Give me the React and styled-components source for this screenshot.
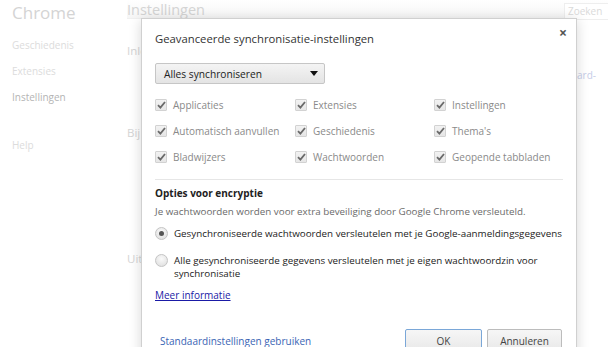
import React from "react"
import styled, { createGlobalStyle } from "styled-components"

const GlobalStyle = createGlobalStyle`
  html, body {
    margin: 0;
    padding: 0;
    background: #fff;
    overflow: hidden;
  }
  body {
    width: 608px;
    height: 347px;
    font-family: "Open Sans", "Liberation Sans", sans-serif;
  }
`

const Page = styled.div`
  position: relative;
  width: 608px;
  height: 347px;
  overflow: hidden;
  display: flex;
  background: #fff;
`

const Sidebar = styled.nav`
  width: 115px;
  padding: 1px 0 0 12px;
  display: flex;
  flex-direction: column;
  .brand {
    font-size: 17px;
    color: #d4d4d4;
    height: 31px;
  }
  .item {
    font-size: 10px;
    color: #dcdcdc;
    height: 26px;
    line-height: 26px;
  }
  .item.active {
    color: #b4b4b4;
  }
  .spacer {
    height: 22px;
  }
`

const Main = styled.main`
  flex: 1;
  display: flex;
  flex-direction: column;
`

const TopBar = styled.header`
  height: 18px;
  display: flex;
  justify-content: space-between;
  align-items: flex-start;
  background: linear-gradient(#fff, #f6f6f6);
  border-bottom: 1px solid #f0f0f0;
  h1 {
    margin: 0;
    font-weight: normal;
    font-size: 14.5px;
    line-height: 20px;
    color: #d4d4d4;
  }
  .search {
    margin-top: 3px;
    width: 40px;
    height: 15px;
    border: 1px solid #eee;
    border-right: none;
    font-size: 10px;
    color: #dadada;
    padding-left: 3px;
    background: #fff;
  }
`

const Section = styled.div`
  font-size: 11.5px;
  color: #d4d4d4;
  margin-top: ${p => p.top}px;
  height: 16px;
  display: flex;
  justify-content: ${p => (p.right ? "flex-end" : "flex-start")};
  .link {
    color: #c6cde8;
    font-size: 10px;
    margin-right: 12px;
  }
`

const Dialog = styled.div`
  position: absolute;
  left: 141px;
  top: 18px;
  width: 434px;
  height: 345px;
  background: #fff;
  border: 1px solid #d0d0d0;
  box-shadow: 0 2px 12px rgba(0, 0, 0, 0.16);
  color: #333;
  font-size: 10px;
`

const DialogHead = styled.div`
  display: flex;
  justify-content: space-between;
  align-items: center;
  padding: 8px 9px 0 13px;
  height: 22px;
  h2 {
    margin: 0;
    font-weight: normal;
    font-size: 11.3px;
    color: #333;
  }
`

const Close = styled.span`
  font-size: 14px;
  color: #555;
  font-weight: bold;
  line-height: 14px;
  margin-top: -11px;
`

const Body = styled.div`
  padding: 0 6px 0 13px;
`

const Select = styled.div`
  margin-top: 14px;
  width: 170px;
  height: 21px;
  box-sizing: border-box;
  border: 1px solid #c6c6c6;
  border-radius: 2px;
  background: linear-gradient(#f4f4f4, #e4e4e4);
  display: flex;
  align-items: center;
  justify-content: space-between;
  padding: 0 6px 0 8px;
  font-size: 10.2px;
  color: #222;
  .arrow {
    width: 0;
    height: 0;
    border-left: 4px solid transparent;
    border-right: 4px solid transparent;
    border-top: 5px solid #111;
  }
`

const Grid = styled.div`
  margin-top: 8px;
  display: grid;
  grid-template-columns: 140px 139px auto;
  grid-auto-rows: 26px;
  align-items: center;
`

const Check = styled.label`
  display: flex;
  align-items: center;
  gap: 6px;
  color: #8a8a8a;
  font-size: 10px;
  .box {
    width: 12px;
    height: 12px;
    box-sizing: border-box;
    border: 1px solid #d2d2d2;
    border-radius: 1px;
    background: linear-gradient(#f2f2f2, #e6e6e6);
    display: flex;
    align-items: center;
    justify-content: center;
  }
`

const Rule = styled.div`
  margin: 9px 7px 0 0;
  border-top: 1px solid #e6e6e6;
`

const Heading = styled.div`
  margin-top: 6px;
  font-weight: bold;
  font-size: 10px;
  color: #222;
  line-height: 14px;
`

const Note = styled.div`
  margin-top: 5px;
  color: #6a6a6a;
  font-size: 9.8px;
  line-height: 14px;
`

const Radio = styled.label`
  display: flex;
  align-items: flex-start;
  gap: 6px;
  margin-top: ${p => p.top}px;
  font-size: 9.8px;
  color: #222;
  line-height: 13px;
  .label {
    max-width: ${p => p.wrapAt || 400}px;
  }
  .dot {
    flex: none;
    width: 13px;
    height: 13px;
    box-sizing: border-box;
    border-radius: 50%;
    border: 1px solid #c4c4c4;
    background: radial-gradient(circle at 50% 35%, #fafafa, #dcdcdc);
    display: flex;
    align-items: center;
    justify-content: center;
  }
  .dot::after {
    content: "";
    width: 5px;
    height: 5px;
    border-radius: 50%;
    background: ${p => (p.checked ? "#555" : "transparent")};
  }
`

const Link = styled.a`
  display: inline-block;
  margin-top: 8px;
  color: #1a1aa6;
  text-decoration: underline;
  font-size: 10px;
`

const Footer = styled.div`
  margin-top: 27px;
  padding: 0 14px 0 18px;
  display: flex;
  align-items: center;
  justify-content: space-between;
  .reset {
    color: #3a64b4;
    font-size: 10px;
  }
  .buttons {
    display: flex;
    gap: 5px;
  }
`

const Button = styled.button`
  width: ${p => p.w}px;
  height: 24px;
  border: 1px solid ${p => (p.primary ? "#7aa7d8" : "#bcbcbc")};
  border-radius: 2px;
  background: linear-gradient(#f6f6f6, #e8e8e8);
  font-family: inherit;
  font-size: 10px;
  color: #444;
`

const CheckMark = () => (
  <svg width="9" height="8" viewBox="0 0 9 8">
    <path d="M1 4.2 L3.4 6.6 L8 1" fill="none" stroke="#6a6a6a" strokeWidth="1.8" />
  </svg>
)

const items = [
  "Applicaties", "Extensies", "Instellingen",
  "Automatisch aanvullen", "Geschiedenis", "Thema's",
  "Bladwijzers", "Wachtwoorden", "Geopende tabbladen",
]

export default function App() {
  return (
    <>
      <GlobalStyle />
      <Page>
        <Sidebar>
          <div className="brand">Chrome</div>
          <div className="item">Geschiedenis</div>
          <div className="item">Extensies</div>
          <div className="item active">Instellingen</div>
          <div className="spacer" />
          <div className="item">Help</div>
        </Sidebar>
        <Main>
          <TopBar>
            <h1>Instellingen</h1>
            <div className="search">Zoeken</div>
          </TopBar>
          <Section top={24}>Inloggen</Section>
          <Section top={9} right>
            <span className="link">standaard-</span>
          </Section>
          <Section top={41}>Bij opstarten</Section>
          <Section top={110}>Uiterlijk</Section>
        </Main>

        <Dialog>
          <DialogHead>
            <h2>Geavanceerde synchronisatie-instellingen</h2>
            <Close>×</Close>
          </DialogHead>
          <Body>
            <Select>
              <span>Alles synchroniseren</span>
              <span className="arrow" />
            </Select>
            <Grid>
              {items.map(t => (
                <Check key={t}>
                  <span className="box"><CheckMark /></span>
                  {t}
                </Check>
              ))}
            </Grid>
            <Rule />
            <Heading>Opties voor encryptie</Heading>
            <Note>Je wachtwoorden worden voor extra beveiliging door Google Chrome versleuteld.</Note>
            <Radio top={8} checked>
              <span className="dot" />
              <span className="label">Gesynchroniseerde wachtwoorden versleutelen met je Google-aanmeldingsgegevens</span>
            </Radio>
            <Radio top={14} wrapAt={380}>
              <span className="dot" />
              <span className="label">Alle gesynchroniseerde gegevens versleutelen met je eigen wachtwoordzin voor synchronisatie</span>
            </Radio>
            <Link href="#">Meer informatie</Link>
          </Body>
          <Footer>
            <span className="reset">Standaardinstellingen gebruiken</span>
            <div className="buttons">
              <Button primary w={77}>OK</Button>
              <Button w={75}>Annuleren</Button>
            </div>
          </Footer>
        </Dialog>
      </Page>
    </>
  )
}
